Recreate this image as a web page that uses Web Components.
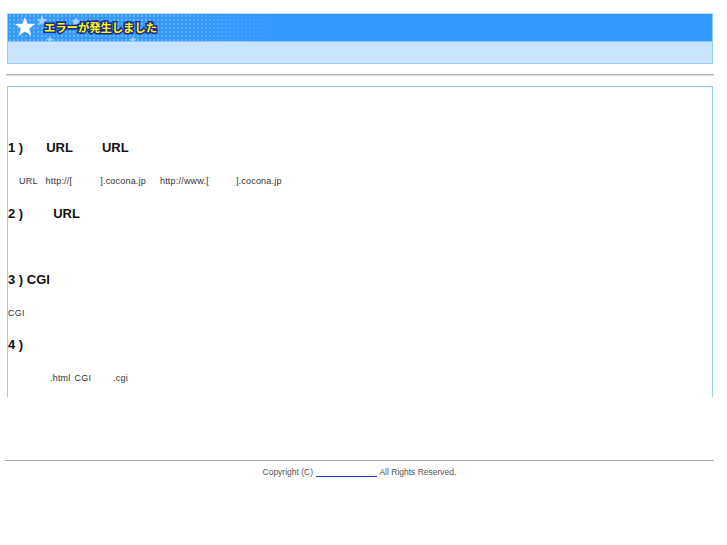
<!DOCTYPE html>
<html lang="ja">
<head>
<meta charset="utf-8">
<title>エラーが発生しました</title>
<style>
  body {
    margin: 0;
    background: #fff;
    font-family: "Liberation Sans", "Noto Sans CJK JP", sans-serif;
    color: #333;
  }
</style>
</head>
<body>
<error-header>エラーが発生しました</error-header>
<page-rule></page-rule>
<help-box>
  <help-item>
    <span slot="title">1 )<i style="width:23px"></i>URL<i style="width:29px"></i>URL</span>
    <i style="width:11px"></i>URL<i style="width:8px"></i>http://[<i style="width:28px"></i>].cocona.jp<i style="width:14px"></i>http://www.[<i style="width:27px"></i>].cocona.jp
  </help-item>
  <help-item>
    <span slot="title">2 )<i style="width:30px"></i>URL</span>
  </help-item>
  <help-item>
    <span slot="title">3 ) CGI</span>
    CGI
  </help-item>
  <help-item>
    <span slot="title">4 )</span>
    <i style="width:42px"></i>.html<i style="width:4px"></i>CGI<i style="width:22px"></i>.cgi
  </help-item>
</help-box>
<page-footer></page-footer>

<script>
class ErrorHeader extends HTMLElement {
  constructor () {
    super()
    this.attachShadow({ mode: 'open' }).innerHTML = /* html */`
    <style>
      :host {
        display: block;
        margin: 13px 14px 0 7px;
        border: 1px solid #99ccff;
        border-top-color: #b8dcff;
        background: #c8e4ff;
      }
      .bar {
        position: relative;
        display: flex;
        align-items: center;
        height: 27px;
        padding-left: 36px;
        background: #3399ff;
        overflow: hidden;
      }
      .dots {
        position: absolute;
        inset: 0 auto 0 0;
        width: 270px;
        background: radial-gradient(circle, #66b3ff 0.8px, transparent 1.1px) 0 0 / 4px 4px;
        -webkit-mask-image: linear-gradient(to right, #000 55%, transparent);
        mask-image: linear-gradient(to right, #000 55%, transparent);
      }
      svg { position: absolute; left: 0; top: 0; }
      h1 {
        position: relative;
        top: -1px;
        margin: 0;
        font: 700 11.3px "Noto Sans CJK JP", sans-serif;
        color: #ffff00;
        -webkit-text-stroke: 3px #1c2a8c;
        paint-order: stroke fill;
      }
      .body { height: 21px; border-top: 1px solid #8cc4fb; }
    </style>
    <div class="bar">
      <div class="dots"></div>
      <svg width="200" height="27" viewBox="0 0 200 27">
        <path fill="#fff" d="M17 3l2.600 6.800 7.400.2-5.800 4.500 2.100 7.200-6.300-4.200-6.300 4.200 2.100-7.200L7 10l7.400-.2z"/>
        <g fill="#a6d2ff">
          <path d="M34 1l1.500 3.900 4.100.1-3.300 2.500 1.200 4-3.500-2.400-3.500 2.400 1.200-4L28.400 5l4.100-.1z"/>
          <path d="M68 3l1.300 3.400 3.600.1-2.900 2.200 1 3.500-3-2.100-3 2.100 1-3.500-2.900-2.200 3.600-.1z"/>
          <path d="M42 22l1 2.600 2.800.1-2.200 1.700.8 2.700-2.400-1.600-2.400 1.600.8-2.700-2.200-1.700 2.800-.1z"/>
          <path d="M125 22l1 2.600 2.800.1-2.200 1.700.8 2.700-2.400-1.600-2.400 1.600.8-2.700-2.200-1.700 2.800-.1z"/>
        </g>
      </svg>
      <h1><slot></slot></h1>
    </div>
    <div class="body"></div>
    `
  }
}

class PageRule extends HTMLElement {
  constructor () {
    super()
    this.attachShadow({ mode: 'open' }).innerHTML = /* html */`
    <style>
      :host {
        display: block;
        height: 1px;
        margin: 10px 13px 10px 6px;
        background: #b4b4b4;
        border-bottom: 1px solid #dcdcdc;
      }
    </style>
    `
  }
}

class HelpBox extends HTMLElement {
  constructor () {
    super()
    this.attachShadow({ mode: 'open' }).innerHTML = /* html */`
    <style>
      :host {
        display: block;
        margin: 0 14px 0 7px;
        padding: 45.4px 0 1.6px;
        border: 1px solid #99ccff;
        border-bottom: 0;
      }
    </style>
    <slot></slot>
    `
  }
}

class HelpItem extends HTMLElement {
  constructor () {
    super()
    this.attachShadow({ mode: 'open' }).innerHTML = /* html */`
    <style>
      :host {
        display: block;
        font-size: 9px;
        letter-spacing: 0.2px;
      }
      h2 {
        margin: 0;
        height: 32.85px;
        line-height: 32.85px;
        font-size: 13px;
        color: #111;
        letter-spacing: 0;
      }
      p {
        margin: 0;
        height: 32.85px;
        line-height: 32.85px;
        white-space: nowrap;
      }
      ::slotted(span) { display: block; }
    </style>
    <h2><slot name="title"></slot></h2>
    <p><slot></slot></p>
    `
  }

  connectedCallback () {
    // spacers stand in for the gaps in the text
    this.querySelectorAll('i').forEach(el => { el.style.display = 'inline-block' })
  }
}

class PageFooter extends HTMLElement {
  constructor () {
    super()
    this.attachShadow({ mode: 'open' }).innerHTML = /* html */`
    <style>
      :host {
        display: block;
        margin: 63px 13px 0 5px;
        padding-top: 5px;
        border-top: 1px solid #aaa;
        text-align: center;
        font-size: 8.5px;
        line-height: 13px;
        color: #555;
      }
      a {
        display: inline-block;
        width: 61px;
        height: 10px;
        margin: 0 2px 0 1px;
        vertical-align: top;
        text-decoration: none;
        border-bottom: 1px solid #1a3fe0;
      }
    </style>
    Copyright (C) <a href="#">&nbsp;</a>All Rights Reserved.
    `
  }
}

customElements.define('error-header', ErrorHeader)
customElements.define('page-rule', PageRule)
customElements.define('help-box', HelpBox)
customElements.define('help-item', HelpItem)
customElements.define('page-footer', PageFooter)
</script>
</body>
</html>
